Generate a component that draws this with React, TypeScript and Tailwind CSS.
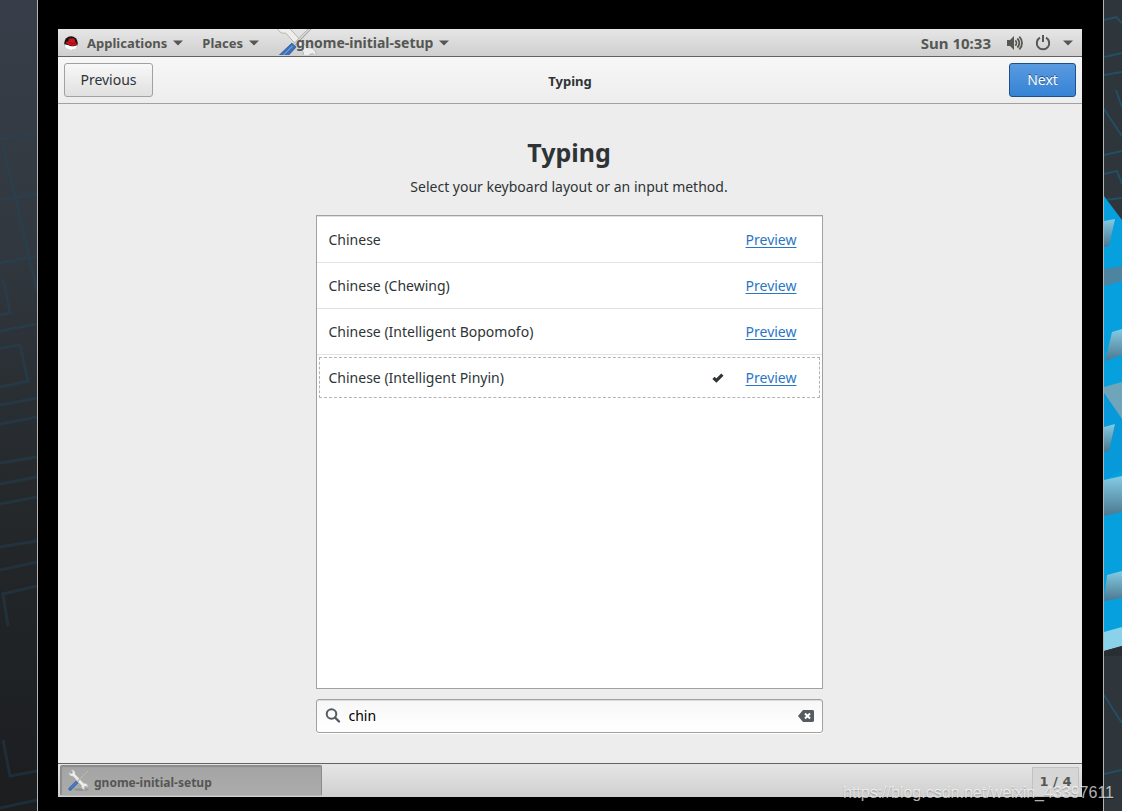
import { useState } from "react";

const LAYOUTS = [
  "Chinese",
  "Chinese (Chewing)",
  "Chinese (Intelligent Bopomofo)",
  "Chinese (Intelligent Pinyin)",
];

function Caret() {
  return (
    <svg viewBox="0 0 10 6" className="h-[6px] w-[10px] shrink-0" fill="#555753" aria-hidden="true">
      <path d="M0 0.5h10L5 5.5z" />
    </svg>
  );
}

function RedHatIcon() {
  return (
    <svg viewBox="0 0 14 14" className="h-[14px] w-[14px] shrink-0" aria-hidden="true">
      <circle cx="7" cy="7" r="6.8" fill="#161616" />
      <path d="M0.3 8.3C2 9 3.4 8.6 4.6 9.3c2 1.4 6 1.3 9-.6A6.8 6.8 0 0 1 .3 8.3z" fill="#fff" />
      <path d="M1.8 6.500c.6-.7 1.600-.9 2.400-.9L5 3c.4-1 1.500-.3 2.300-.5 1-.3 2.600-.4 3.200.8.5 1.100 1 2.200 1 3.200 1 .5 1.600 1.300 1.200 2.100-.8 1.400-3.800 1.500-6.200.6-2-.7-4.900-1.600-4.700-2.700z" fill="#d3121b" />
      <path d="M4.300 5.600c1.500 1.500 5 2.600 7.200 1.300" fill="none" stroke="#7c0d12" strokeWidth=".8" />
    </svg>
  );
}

function ToolsIcon({ className }: { className: string }) {
  return (
    <svg viewBox="0 0 24 24" className={className} aria-hidden="true">
      <ellipse cx="15" cy="21.5" rx="8" ry="1.5" fill="#000" opacity=".14" />
      {/* wrench */}
      <path
        d="M2.200 3.300 3.800 4.900l1.800-.5.4-1.700L4.500 1.200c1.500-.4 3.100.3 3.700 1.600.4.900.3 1.700.1 2.400l9 9.700c1-.2 2-.1 2.900.6 1.200.9 1.600 2.300 1.300 3.600l-1.600-1.300-1.700.5-.5 1.700 1.300 1.500c-1.400.2-2.700-.4-3.400-1.500-.5-.9-.6-1.700-.3-2.600L6.300 7.500c-1 .3-2 .1-2.900-.6-1.100-1-1.500-2.300-1.200-3.600z"
        fill="#eeeeec"
        stroke="#b4b6b1"
        strokeWidth=".5"
      />
      {/* screwdriver */}
      <path d="M21.500 2.300 10.500 13.500" stroke="#9b9d98" strokeWidth="1.300" />
      <path d="M21.800 2 10.500 13.300" stroke="#e3e3e1" strokeWidth=".6" />
      <path d="M11.500 14.600 5 21.500c-.8.9-2 1.200-2.800.5-.8-.8-.5-2 .3-2.800l6.900-6.600z" fill="#3a70b8" stroke="#2f5f9f" strokeWidth=".5" />
      <path d="m3.500 20.200 6.300-6.200" stroke="#6f9cd8" strokeWidth=".6" />
    </svg>
  );
}

function VolumeIcon() {
  return (
    <svg viewBox="0 0 16 16" className="h-4 w-4 shrink-0" fill="none" stroke="#555753" aria-hidden="true">
      <path d="M0 5h3l4-4v14l-4-4H0z" fill="#555753" stroke="none" />
      <path d="M8.300 5.300c1.500 1.500 1.500 3.900 0 5.400" strokeWidth="1.800" />
      <path d="M10.300 3.500c2.700 2.500 2.700 6.500 0 9" strokeWidth="1.800" />
      <path d="M12.300 1.600c3.600 3.500 3.600 9.300 0 12.800" strokeWidth="1.800" />
    </svg>
  );
}

function PowerIcon() {
  return (
    <svg viewBox="0 0 16 16" className="h-4 w-4 shrink-0" fill="none" stroke="#555753" strokeWidth="2" aria-hidden="true">
      <path d="M5 2.700a6.200 6.200 0 1 0 6 0" />
      <path d="M8 0v7" />
    </svg>
  );
}

function CheckIcon() {
  return (
    <svg viewBox="0 0 12 10" className="h-[10px] w-3 shrink-0" aria-hidden="true">
      <path d="M1.500 4.800 4.400 7.600 10.400 1.700" fill="none" stroke="#2e3436" strokeWidth="3.200" />
    </svg>
  );
}

function SearchIcon() {
  return (
    <svg viewBox="0 0 16 16" className="h-4 w-4 shrink-0" fill="none" stroke="#555b5e" strokeWidth="2" aria-hidden="true">
      <circle cx="6.5" cy="6" r="4.800" />
      <path d="m10 9.500 4 4" strokeWidth="2.400" strokeLinecap="round" />
    </svg>
  );
}

function ClearIcon() {
  return (
    <svg viewBox="0 0 16 14" className="h-[14px] w-4" aria-hidden="true">
      <path d="M0 7 5 1h9.500c.8 0 1.500.6 1.500 1.400v9.200c0 .8-.7 1.400-1.500 1.400H5z" fill="#555b5e" />
      <path d="m7 4.500 5 5m0-5-5 5" stroke="#fff" strokeWidth="2" />
    </svg>
  );
}

function WallpaperLeft() {
  return (
    <svg viewBox="0 0 37 811" preserveAspectRatio="xMinYMin slice" className="w-[37px] shrink-0" aria-hidden="true">
      <defs>
        <linearGradient id="left-bg" x1="0" y1="0" x2="0" y2="1">
          <stop offset="0" stopColor="#383e49" />
          <stop offset=".3" stopColor="#31383f" />
          <stop offset=".6" stopColor="#25292c" />
          <stop offset="1" stopColor="#1b1d1f" />
        </linearGradient>
      </defs>
      <rect width="37" height="811" fill="url(#left-bg)" />
      <g fill="none" stroke="#21485f" strokeWidth="3" opacity=".38">
        <path d="M0 139 37 133M0 200l37-6M0 263l37-7M3 145l13 55 14 62 7 28M0 331l37-7" />
        <path d="M3 278l7 35-10 2M0 348l20-3 8 36-28 6M0 405l37-7M0 424l37-7" />
        <path d="M0 463l37-6M0 484l37-7M0 504l37-7M0 547l37-6M0 570l37-8M37 586 3 594l5 32M3 740l7 36 27-5M0 808l37-8" />
      </g>
    </svg>
  );
}

function WallpaperRight() {
  return (
    <svg viewBox="0 0 18 811" preserveAspectRatio="xMinYMin slice" className="w-[18px] shrink-0" aria-hidden="true">
      <defs>
        <linearGradient id="face" x1="0" y1="0" x2="0" y2="1">
          <stop offset="0" stopColor="#84cbe4" />
          <stop offset="1" stopColor="#4b7890" />
        </linearGradient>
      </defs>
      <rect width="18" height="811" fill="#2e353b" />
      <g fill="none" stroke="#1f566f" strokeWidth="2" opacity=".8">
        <path d="M0 20l12-3 6 6M0 57l18-4M0 75l18-3M12 90l6 17M0 109l18 27M0 155l18-4M0 174l13-3 5 13M0 200l18-2" />
        <path d="M0 695l18 28M0 774l18-4" />
      </g>
      <path d="M0 196 18 220V631L0 651z" fill="#06a0df" />
      <path d="M0 221l11-2-6 27-5 1z" fill="url(#face)" />
      <path d="M0 269l18-3v15L0 286z" fill="#4d84a0" />
      <path d="M8 332l10-3v26L1 361z" fill="url(#face)" />
      <path d="M0 387l18-5v38L0 393z" fill="#6fa5bb" />
      <path d="M0 393l18 26v51L0 480z" fill="#0799d9" />
      <path d="M0 427l11-3-6 27-5 1z" fill="url(#face)" />
      <path d="M0 480l18-4v36L0 516z" fill="url(#face)" />
      <path d="M3 575l15-4v27L0 601z" fill="url(#face)" />
      <path d="M0 632l18-5v19L0 651z" fill="#8ad2e9" />
      <path d="M0 651l18-5v10H0z" fill="#292e33" />
    </svg>
  );
}

function TopPanel() {
  return (
    <header className="flex h-7 items-center border-b border-[#626262] bg-linear-to-b from-[#e6e6e6] to-[#cfcfcf] pl-1.5 pr-[9px] text-[13px] font-bold text-[#555753]">
      <RedHatIcon />
      <button className="ml-[9px] flex items-center gap-1.5">
        Applications <Caret />
      </button>
      <button className="ml-[19px] flex items-center gap-1.5">
        Places <Caret />
      </button>
      <button className="relative ml-[37px] flex h-[27px] items-center gap-1.5">
        <span className="absolute -left-[22px] top-0 flex h-[26px] w-[46px] items-center justify-center overflow-hidden">
          <ToolsIcon className="h-12 w-12 shrink-0" />
        </span>
        <span className="relative text-[14px]">gnome-initial-setup</span>
        <Caret />
      </button>
      <time className="ml-auto text-[15px]">Sun 10:33</time>
      <button aria-label="System menu" className="ml-4 flex items-center gap-3">
        <VolumeIcon />
        <PowerIcon />
        <Caret />
      </button>
    </header>
  );
}

function TitleBar() {
  return (
    <div className="grid h-[47px] grid-cols-3 items-center border-b border-[#a1a1a1] bg-linear-to-b from-[#f7f7f7] to-[#ededed] px-1.5">
      <button className="h-[34px] w-[89px] rounded-[3px] border border-[#a1a1a1] bg-linear-to-b from-[#f8f8f8] to-[#e0e0e0]">
        Previous
      </button>
      <h1 className="pt-0.5 text-center text-[13px] font-bold">Typing</h1>
      <button className="h-[34px] w-[67px] justify-self-end rounded-[3px] border border-[#1c5187] bg-linear-to-b from-[#5a9ae0] to-[#3583d5] text-white text-shadow-[0_-1px_#1c5187]">
        Next
      </button>
    </div>
  );
}

function LayoutPicker() {
  const [selected, setSelected] = useState("Chinese (Intelligent Pinyin)");
  const [query, setQuery] = useState("chin");

  const visible = LAYOUTS.filter((name) => name.toLowerCase().includes(query.toLowerCase()));

  return (
    <main className="flex flex-1 flex-col items-center bg-[#ededed] pb-[30px] pl-6 pr-[26px] pt-[30px]">
      <h2 className="text-[25px] font-bold leading-9">Typing</h2>
      <p className="mt-[5px] leading-6">Select your keyboard layout or an input method.</p>

      <ul className="mt-4 min-h-[474px] w-full max-w-[507px] flex-1 border border-[#a1a1a1] bg-white pt-px shadow-[inset_0_1px_#e0e0e0]">
        {visible.map((name) => {
          const active = name === selected;
          return (
            <li key={name} className={active ? "p-0.5" : "border-b border-[#e2e2e2]"}>
              <div
                className={
                  active
                    ? "flex h-[41px] items-center border border-dashed border-[#b4b4b4] pl-[9px] pr-[22px]"
                    : "flex h-[45px] items-center pl-3 pr-[25px]"
                }
              >
                <button onClick={() => setSelected(name)} className="flex flex-1 items-center justify-between text-left">
                  {name}
                  {active && <CheckIcon />}
                </button>
                <a href="#preview" className="ml-[22px] text-[#2a76c6] underline underline-offset-2">
                  Preview
                </a>
              </div>
            </li>
          );
        })}
      </ul>

      <div className="mt-2.5 flex h-[34px] w-full max-w-[507px] items-center gap-2 rounded-[3px] border border-[#a1a1a1] bg-linear-to-b from-[#f7f7f7] to-white px-2 shadow-[0_1px_white,inset_0_1px_#dcdcdc]">
        <SearchIcon />
        <input
          type="text"
          aria-label="Search layouts"
          value={query}
          onChange={(e) => setQuery(e.target.value)}
          className="min-w-0 flex-1 bg-transparent text-black outline-none"
        />
        <button aria-label="Clear search" onClick={() => setQuery("")}>
          <ClearIcon />
        </button>
      </div>
    </main>
  );
}

function WindowList() {
  return (
    <footer className="flex h-[34px] justify-between border-t border-[#626262] bg-linear-to-b from-[#e6e6e6] to-[#cfcfcf] pl-0.5 pr-[3px] pt-px font-bold text-[#555753]">
      <button className="flex h-[31px] w-[262px] items-center gap-1 rounded-[2px] border border-[#8a8a8a] border-b-[#b8b8b8] bg-linear-to-b from-[#a4a4a4] to-[#acacac] px-1.5 text-[12px] shadow-[inset_1px_1px_1px_#8c8c8c]">
        <ToolsIcon className="h-[23px] w-[23px] shrink-0" />
        <span className="pt-1">gnome-initial-setup</span>
      </button>
      <button className="mt-0.5 h-[30px] w-[47px] border border-[#c2c2c2] bg-[#d6d6d6] font-['DejaVu_Sans'] text-[13px]">
        1 / 4
      </button>
    </footer>
  );
}

export default function App() {
  return (
    <div className="relative flex min-h-screen bg-black font-['Noto_Sans',sans-serif] text-[14px] leading-5 text-[#2e3436]">
      <WallpaperLeft />
      <div className="flex flex-1 flex-col border-x border-[#b5b5b5] bg-black pb-3.5 pl-5 pr-[21px] pt-[29px]">
        <TopPanel />
        <TitleBar />
        <LayoutPicker />
        <WindowList />
      </div>
      <WallpaperRight />
      <div className="pointer-events-none absolute bottom-2 right-2 font-['Liberation_Sans',sans-serif] text-[16px] text-white/70 text-shadow-[0_1px_1px_rgb(0_0_0/0.3)]">
        https://blog.csdn.net/weixin_43397611
      </div>
    </div>
  );
}
